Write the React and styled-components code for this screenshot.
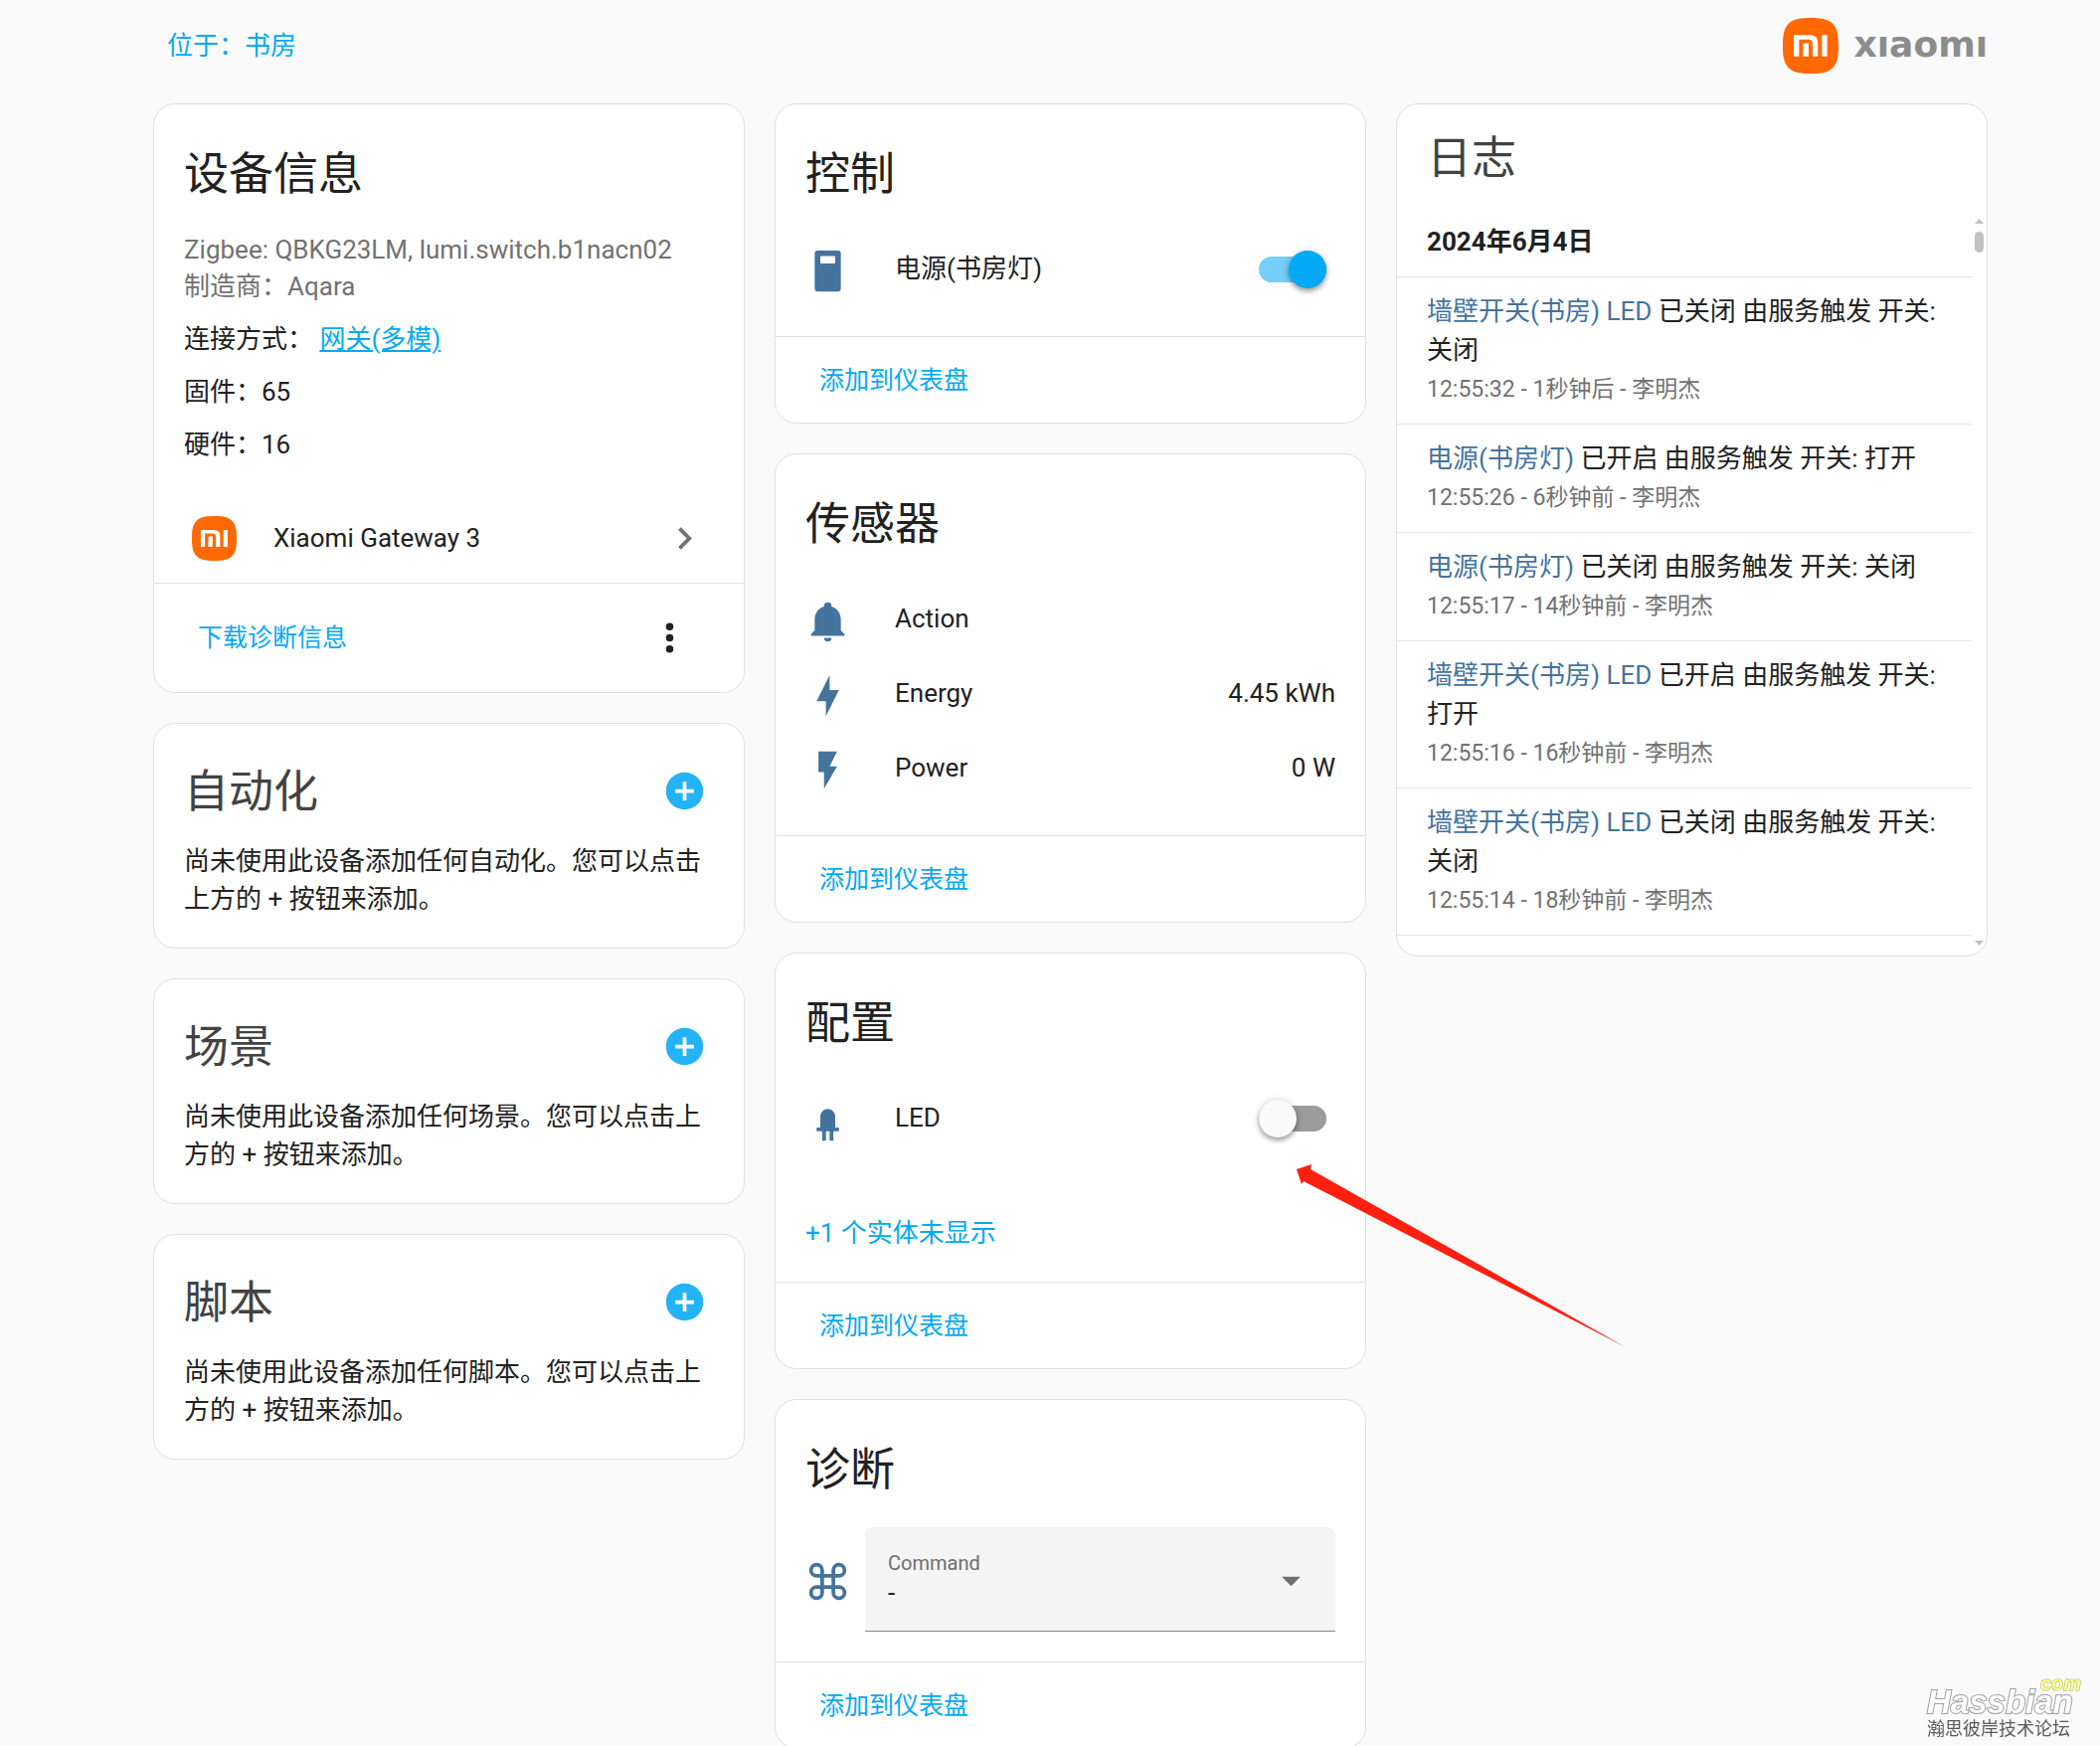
import React from "react";
import styled, { createGlobalStyle } from "styled-components";
import { SiXiaomi } from "react-icons/si";

const ICONS = {
  device: "M6.5,1H17.5A1.5,1.5 0 0,1 19,2.5V21.5A1.5,1.5 0 0,1 17.5,23H6.5A1.5,1.5 0 0,1 5,21.5V2.5A1.5,1.5 0 0,1 6.5,1M8.5,4A0.5,0.5 0 0,0 8,4.5V7.5A0.5,0.5 0 0,0 8.5,8H15.5A0.5,0.5 0 0,0 16,7.5V4.5A0.5,0.5 0 0,0 15.5,4Z",
  bell: "M21,19V20H3V19L5,17V11C5,7.9 7.03,5.17 10,4.29C10,4.19 10,4.1 10,4A2,2 0 0,1 12,2A2,2 0 0,1 14,4C14,4.1 14,4.19 14,4.29C16.97,5.17 19,7.9 19,11V17L21,19M14,21A2,2 0 0,1 12,23A2,2 0 0,1 10,21",
  bolt: "M11 15H6L13 1V9H18L11 23V15Z",
  flash: "M7,2V13H10V22L17,10H13L17,2H7Z",
  led: "M12,6A4,4 0 0,0 8,10V16H6V18H9V23H11V18H13V23H15V18H18V16H16V10A4,4 0 0,0 12,6Z",
  command:
    "M6,2A4,4 0 0,1 10,6V8H14V6A4,4 0 0,1 18,2A4,4 0 0,1 22,6A4,4 0 0,1 18,10H16V14H18A4,4 0 0,1 22,18A4,4 0 0,1 18,22A4,4 0 0,1 14,18V16H10V18A4,4 0 0,1 6,22A4,4 0 0,1 2,18A4,4 0 0,1 6,14H8V10H6A4,4 0 0,1 2,6A4,4 0 0,1 6,2M16,18A2,2 0 0,0 18,20A2,2 0 0,0 20,18A2,2 0 0,0 18,16H16V18M14,10H10V14H14V10M6,16A2,2 0 0,0 4,18A2,2 0 0,0 6,20A2,2 0 0,0 8,18V16H6M8,6A2,2 0 0,0 6,4A2,2 0 0,0 4,6A2,2 0 0,0 6,8H8V6M18,8A2,2 0 0,0 20,6A2,2 0 0,0 18,4A2,2 0 0,0 16,6V8H18Z",
  chevron: "M8.59,16.58L13.17,12L8.59,7.41L10,6L16,12L10,18L8.59,16.58Z",
  plus: "M17,13H13V17H11V13H7V11H11V7H13V11H17M12,2A10,10 0 0,0 2,12A10,10 0 0,0 12,22A10,10 0 0,0 22,12A10,10 0 0,0 12,2Z",
  dots: "M12,16A2,2 0 0,1 14,18A2,2 0 0,1 12,20A2,2 0 0,1 10,18A2,2 0 0,1 12,16M12,10A2,2 0 0,1 14,12A2,2 0 0,1 12,14A2,2 0 0,1 10,12A2,2 0 0,1 12,10M12,4A2,2 0 0,1 14,6A2,2 0 0,1 12,8A2,2 0 0,1 10,6A2,2 0 0,1 12,4Z",
  menuDown: "M7,10L12,15L17,10H7Z",
};

const EMPTY_CARDS = [
  { title: "自动化", text: "尚未使用此设备添加任何自动化。您可以点击上方的 + 按钮来添加。" },
  { title: "场景", text: "尚未使用此设备添加任何场景。您可以点击上方的 + 按钮来添加。" },
  { title: "脚本", text: "尚未使用此设备添加任何脚本。您可以点击上方的 + 按钮来添加。" },
];

const SENSORS = [
  { icon: "bell", name: "Action", value: "" },
  { icon: "bolt", name: "Energy", value: "4.45 kWh" },
  { icon: "flash", name: "Power", value: "0 W" },
];

const LOGS = [
  { entity: "墙壁开关(书房) LED", text: "已关闭 由服务触发 开关: 关闭", time: "12:55:32 - 1秒钟后 - 李明杰" },
  { entity: "电源(书房灯)", text: "已开启 由服务触发 开关: 打开", time: "12:55:26 - 6秒钟前 - 李明杰" },
  { entity: "电源(书房灯)", text: "已关闭 由服务触发 开关: 关闭", time: "12:55:17 - 14秒钟前 - 李明杰" },
  { entity: "墙壁开关(书房) LED", text: "已开启 由服务触发 开关: 打开", time: "12:55:16 - 16秒钟前 - 李明杰" },
  { entity: "墙壁开关(书房) LED", text: "已关闭 由服务触发 开关: 关闭", time: "12:55:14 - 18秒钟前 - 李明杰" },
];

function Icon({ name }) {
  return (
    <IconSvg viewBox="0 0 24 24" aria-hidden="true">
      <path d={ICONS[name]} />
    </IconSvg>
  );
}

function DashboardFooter() {
  return (
    <CardFooter>
      <TextButton type="button">添加到仪表盘</TextButton>
    </CardFooter>
  );
}

function SwitchRow({ icon, name, on }) {
  return (
    <Row as="label">
      <EntityIcon>
        <Icon name={icon} />
      </EntityIcon>
      <RowName>{name}</RowName>
      <Switch type="checkbox" role="switch" defaultChecked={on} />
    </Row>
  );
}

function DeviceInfoCard() {
  return (
    <Card>
      <CardTitle>设备信息</CardTitle>
      <DeviceInfo>
        <div className="model">Zigbee: QBKG23LM, lumi.switch.b1nacn02</div>
        <div className="model">制造商：Aqara</div>
        <p>
          连接方式： <a href="#gateway">网关(多模)</a>
        </p>
        <p>固件：65</p>
        <p>硬件：16</p>
      </DeviceInfo>
      <IntegrationLink href="#integration">
        <MiBadge size={45} />
        <span>Xiaomi Gateway 3</span>
        <Icon name="chevron" />
      </IntegrationLink>
      <CardFooter $tall>
        <TextButton type="button">下载诊断信息</TextButton>
        <IconButton type="button" aria-label="更多">
          <Icon name="dots" />
        </IconButton>
      </CardFooter>
    </Card>
  );
}

function EmptyCard({ title, text }) {
  return (
    <Card>
      <SectionHeader>
        <h1>{title}</h1>
        <AddButton type="button" aria-label={`添加${title}`}>
          <Icon name="plus" />
        </AddButton>
      </SectionHeader>
      <EmptyText>{text}</EmptyText>
    </Card>
  );
}

function Logbook() {
  return (
    <Card>
      <LogTitle>日志</LogTitle>
      <LogBody>
        <LogList>
          <LogDate>2024年6月4日</LogDate>
          {LOGS.map((log) => (
            <LogEntry key={log.time}>
              <div className="message">
                <a href="#entity">{log.entity}</a> {log.text}
              </div>
              <div className="time">{log.time}</div>
            </LogEntry>
          ))}
        </LogList>
        <ScrollTrack aria-hidden="true">
          <svg width="9" height="5" viewBox="0 0 9 5">
            <path d="M0 5L4.5 0L9 5Z" />
          </svg>
          <span />
          <svg width="9" height="5" viewBox="0 0 9 5">
            <path d="M0 0L4.5 5L9 0Z" />
          </svg>
        </ScrollTrack>
      </LogBody>
    </Card>
  );
}

export default function App() {
  return (
    <>
      <GlobalStyle />
      <Header>
        <a href="#area">位于：书房</a>
        <Brand aria-label="xiaomi">
          <MiBadge size={56} />
          <span>xıaomı</span>
        </Brand>
      </Header>

      <Columns>
        <Column>
          <DeviceInfoCard />
          {EMPTY_CARDS.map((card) => (
            <EmptyCard key={card.title} {...card} />
          ))}
        </Column>

        <Column>
          <Card>
            <CardTitle>控制</CardTitle>
            <CardContent>
              <SwitchRow icon="device" name="电源(书房灯)" on />
            </CardContent>
            <DashboardFooter />
          </Card>

          <Card>
            <CardTitle>传感器</CardTitle>
            <CardContent>
              {SENSORS.map((sensor) => (
                <Row key={sensor.name}>
                  <EntityIcon>
                    <Icon name={sensor.icon} />
                  </EntityIcon>
                  <RowName>{sensor.name}</RowName>
                  <span>{sensor.value}</span>
                </Row>
              ))}
            </CardContent>
            <DashboardFooter />
          </Card>

          <Card>
            <CardTitle>配置</CardTitle>
            <CardContent>
              <SwitchRow icon="led" name="LED" />
              <ShowMore type="button">+1 个实体未显示</ShowMore>
            </CardContent>
            <DashboardFooter />
            <Pointer viewBox="0 0 331 184" aria-hidden="true">
              <path d="M0 5L15 0L14 5L331 184L7 17L5 20Z" />
            </Pointer>
          </Card>

          <Card>
            <CardTitle>诊断</CardTitle>
            <CardContent>
              <SelectRow>
                <EntityIcon>
                  <Icon name="command" />
                </EntityIcon>
                <SelectField>
                  <span>Command</span>
                  <select defaultValue="-">
                    <option>-</option>
                  </select>
                  <Icon name="menuDown" />
                </SelectField>
              </SelectRow>
            </CardContent>
            <DashboardFooter />
          </Card>
        </Column>

        <Column>
          <Logbook />
        </Column>
      </Columns>

      <Watermark>
        <em>com</em>
        <strong>Hassbian</strong>
        <span>瀚思彼岸技术论坛</span>
      </Watermark>
    </>
  );
}

const GlobalStyle = createGlobalStyle`
  * {
    box-sizing: border-box;
  }

  html {
    scrollbar-width: none;
  }

  body {
    margin: 0;
    background: #fafafa;
    color: #212121;
    font-family: Roboto, "Noto Sans CJK SC", sans-serif;
    font-size: 26px;
    line-height: 37px;
  }

  h1, h2, p {
    margin: 0;
    font-weight: 400;
  }

  button, select {
    padding: 0;
    border: 0;
    background: none;
    color: inherit;
    font: inherit;
    cursor: pointer;
  }

  a {
    color: #03a9f4;
  }
`;

const Header = styled.header`
  display: flex;
  align-items: center;
  justify-content: space-between;
  padding: 18px 113px 30px 168px;

  a {
    text-decoration: none;
  }
`;

const Brand = styled.div`
  display: flex;
  align-items: center;
  gap: 16px;
  color: #8c8c8c;
  font-family: "DejaVu Sans", sans-serif;
  font-size: 36px;
  font-weight: 700;

  span {
    padding-bottom: 4px;
  }
`;

const MiBadge = styled(SiXiaomi)`
  flex: none;
  border-radius: 32%;
  background: #fff;
  color: #ff6900;
`;

const Columns = styled.main`
  display: grid;
  grid-template-columns: repeat(3, minmax(0, 1fr));
  align-items: start;
  gap: 30px;
  padding: 0 113px 0 154px;
`;

const Column = styled.div`
  display: flex;
  flex-direction: column;
  gap: 30px;
`;

const Card = styled.section`
  position: relative;
  border: 1px solid #e0e0e0;
  border-radius: 22px;
  background: #fff;
`;

const CardTitle = styled.h1`
  padding: 26px 30px 12px;
  font-size: 45px;
  line-height: 90px;
`;

const CardContent = styled.div`
  padding: 0 30px 30px;
`;

const CardFooter = styled.div`
  display: flex;
  align-items: center;
  justify-content: space-between;
  height: ${({ $tall }) => ($tall ? 110 : 87)}px;
  padding: 0 52px 0 44px;
  border-top: 1px solid #e0e0e0;
`;

const TextButton = styled.button`
  color: #03a9f4;
  font-size: 25px;
`;

const IconSvg = styled.svg`
  display: block;
  flex: none;
  width: 45px;
  height: 45px;
  fill: currentColor;
`;

const IconButton = styled.button`
  color: #212121;
`;

const AddButton = styled.button`
  color: #24b3f6;
`;

const DeviceInfo = styled.div`
  padding: 0 30px 30px;

  .model {
    color: #727272;
  }

  p {
    margin-top: 16px;
  }
`;

const IntegrationLink = styled.a`
  display: flex;
  align-items: center;
  gap: 37px;
  height: 90px;
  padding: 0 37px 0 38px;
  color: #212121;
  text-decoration: none;

  span {
    flex: 1;
  }

  ${IconSvg} {
    color: #727272;
  }
`;

const SectionHeader = styled.div`
  display: flex;
  align-items: center;
  justify-content: space-between;
  padding: 20px 37px 5px 30px;
  color: #424242;

  h1 {
    padding-top: 4px;
    font-size: 45px;
    line-height: 90px;
  }
`;

const EmptyText = styled.p`
  padding: 0 30px 30px;
  line-height: 38px;
`;

const Row = styled.div`
  display: flex;
  align-items: center;
  height: 75px;
`;

const EntityIcon = styled.span`
  flex: none;
  padding-top: 4px;
  color: #44739e;
`;

const RowName = styled.span`
  flex: 1;
  padding-left: 45px;
`;

const Switch = styled.input`
  position: relative;
  appearance: none;
  width: 68px;
  height: 26px;
  margin: 0 9px 0 0;
  border-radius: 13px;
  background: #9b9b9b;
  cursor: pointer;

  &::before {
    content: "";
    position: absolute;
    top: -6px;
    left: 0;
    width: 38px;
    height: 38px;
    border-radius: 50%;
    background: #fafafa;
    box-shadow: 0 3px 5px rgba(0, 0, 0, 0.35), 0 0 8px rgba(0, 0, 0, 0.12);
  }

  &:checked {
    background: #75cff9;
  }

  &:checked::before {
    left: 30px;
    background: #03a9f4;
  }
`;

const ShowMore = styled.button`
  display: block;
  margin-top: 60px;
  color: #03a9f4;
`;

const Pointer = styled.svg`
  position: absolute;
  top: 212px;
  left: 524px;
  z-index: 1;
  width: 331px;
  height: 184px;
  fill: #ff2010;
  pointer-events: none;
`;

const SelectRow = styled.div`
  display: flex;
  align-items: center;
  gap: 15px;
`;

const SelectField = styled.label`
  flex: 1;
  display: grid;
  grid-template-columns: 1fr 45px;
  grid-template-rows: 24px 34px;
  align-items: center;
  height: 105px;
  padding: 24px 22px 0 23px;
  border-bottom: 1px solid #8a8a8a;
  border-radius: 8px 8px 0 0;
  background: #f4f4f4;

  span {
    color: #6e6e6e;
    font-size: 20px;
  }

  select {
    grid-row: 2;
    appearance: none;
    height: 34px;
    outline: 0;
  }

  ${IconSvg} {
    grid-column: 2;
    grid-row: 1 / 3;
    color: #6e6e6e;
  }
`;

const LogTitle = styled.h1`
  padding: 10px 30px 8px;
  color: #424242;
  font-size: 45px;
  line-height: 90px;
`;

const LogBody = styled.div`
  display: flex;
`;

const LogList = styled.div`
  flex: 1;
  padding-bottom: 20px;
`;

const LogDate = styled.h2`
  padding: 0 30px 5px;
  border-bottom: 1px solid #e0e0e0;
  font-size: 26px;
  font-weight: 700;
  line-height: 60px;
`;

const LogEntry = styled.article`
  padding: 15px 22px 15px 30px;
  border-bottom: 1px solid #e6e6e6;
  line-height: 39px;

  a {
    color: #44739e;
    text-decoration: none;
  }

  .time {
    color: #727272;
    font-size: 23px;
  }
`;

const ScrollTrack = styled.div`
  display: flex;
  flex-direction: column;
  align-items: center;
  gap: 8px;
  width: 15px;
  padding: 7px 0 10px;
  fill: #c1c1c1;

  span {
    width: 9px;
    height: 21px;
    margin-bottom: auto;
    border-radius: 5px;
    background: #c1c1c1;
  }
`;

const Watermark = styled.div`
  position: fixed;
  right: 19px;
  bottom: 4px;
  display: flex;
  flex-direction: column;
  width: 155px;
  font-family: "Liberation Sans", "Noto Sans CJK SC", sans-serif;
  font-style: italic;
  font-weight: 700;
  pointer-events: none;

  em {
    align-self: flex-end;
    color: #ffff80;
    font-size: 20px;
    line-height: 10px;
    -webkit-text-stroke: 1px #a8a878;
    paint-order: stroke;
  }

  strong {
    color: #fff;
    font-size: 33px;
    line-height: 28px;
    -webkit-text-stroke: 2px #a0a0a0;
    paint-order: stroke;
  }

  span {
    color: #5a5a5a;
    font-size: 18px;
    font-style: normal;
    font-weight: 400;
    line-height: 26px;
  }
`;
